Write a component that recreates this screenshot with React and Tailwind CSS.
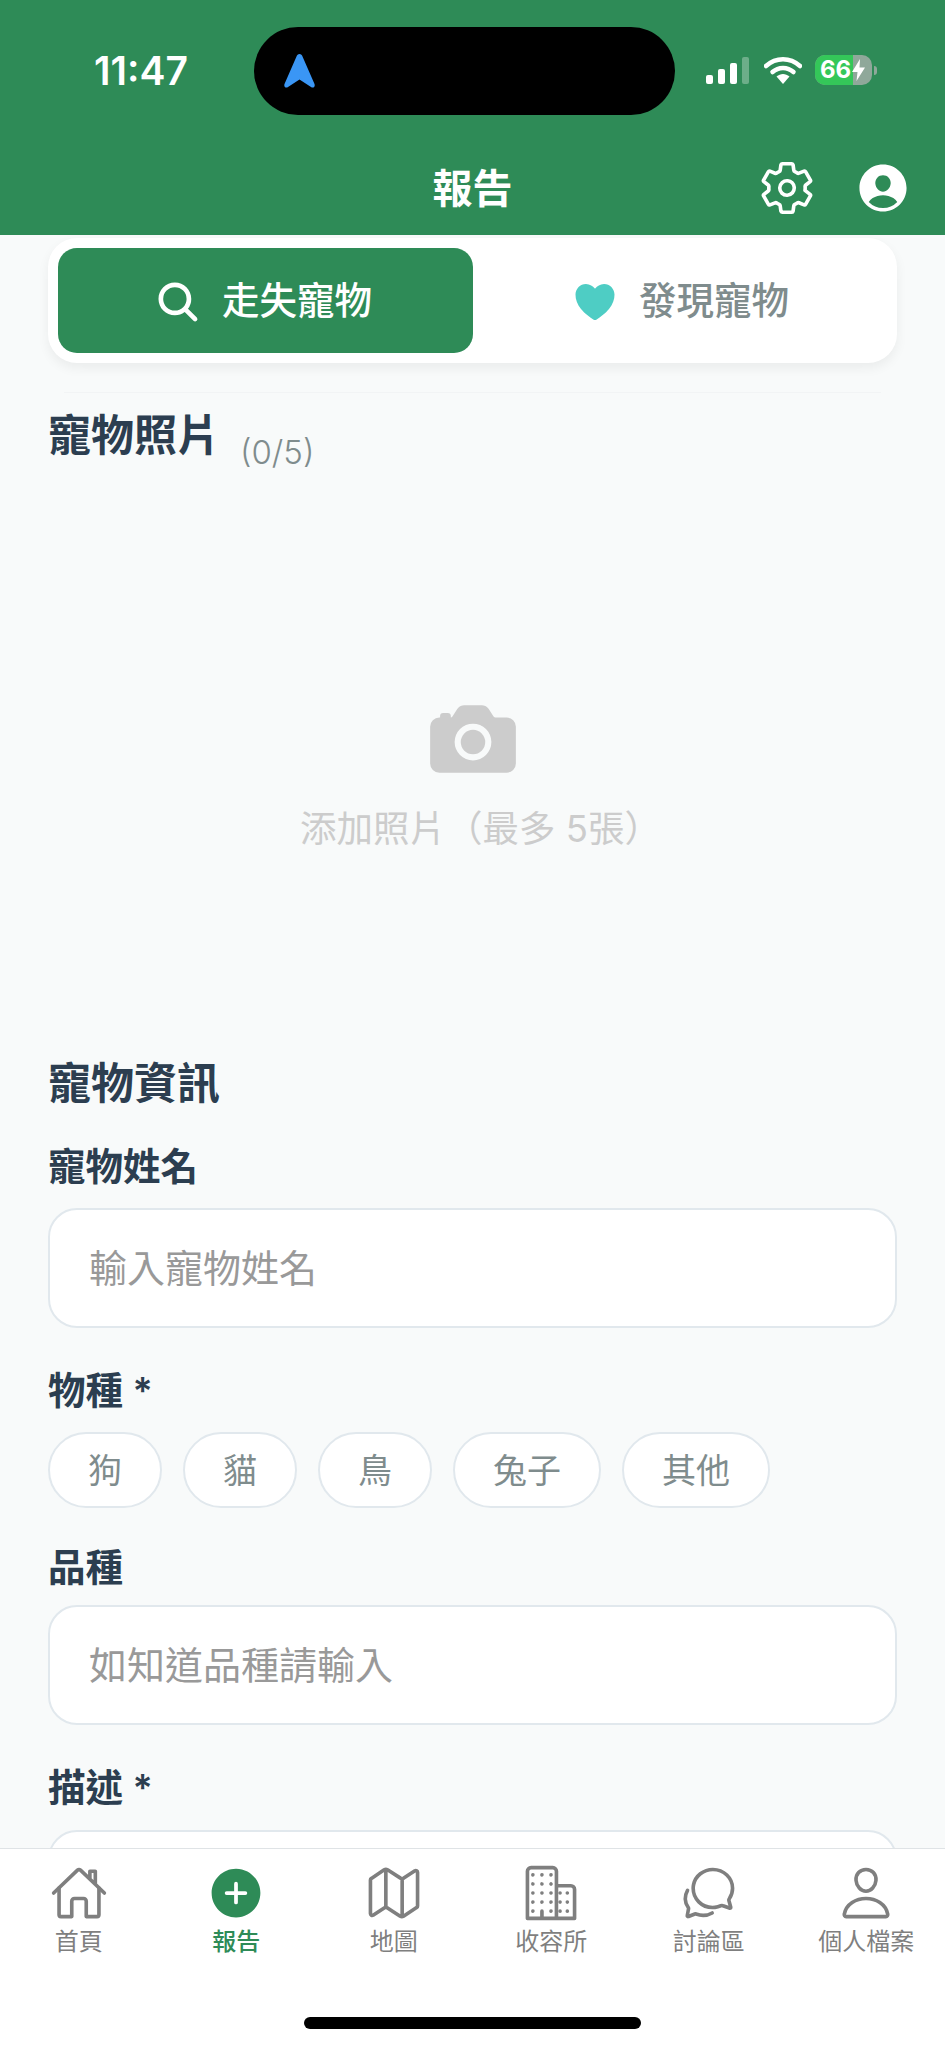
import React from "react";
import {
  IoSettingsOutline, IoPersonCircle, IoSearch, IoHeart, IoCamera, IoHomeOutline, IoAddCircle,
  IoMapOutline, IoBusinessOutline, IoChatbubblesOutline, IoPersonOutline,
} from "react-icons/io5";

function StatusIcons() {
  return (
    <div className="flex items-center">
      <svg width="44" height="27" viewBox="0 0 44 27" className="block">
        <rect x="0" y="18" width="7" height="9" rx="2" fill="#fff" />
        <rect x="12" y="12" width="7" height="15" rx="2" fill="#fff" />
        <rect x="24" y="6" width="7" height="21" rx="2" fill="#fff" />
        <rect x="36" y="0" width="7" height="27" rx="2" fill="#fff" fillOpacity="0.3" />
      </svg>
      <svg width="38" height="29" viewBox="0 0 38 29" className="block ml-[14px]">
        <path d="M2 10 C12 1 26 1 36 10" stroke="#fff" strokeWidth="4.5" fill="none" strokeLinecap="round" />
        <path d="M8.5 16 C14.5 10.5 23.5 10.5 29.5 16" stroke="#fff" strokeWidth="4.5" fill="none" strokeLinecap="round" />
        <path d="M12.5 20.5 C16.5 17 21.5 17 25.5 20.5 L19 28 Z" fill="#fff" />
      </svg>
      <div className="relative ml-[13px] w-[57px] h-[30px] rounded-[10px] overflow-hidden bg-[#8fa89a] flex items-center pl-[5px]">
        <div className="absolute left-0 top-0 bottom-0 w-[38px] bg-[#34c759]" />
        <span className="relative text-white text-[24px] leading-[30px] font-bold font-['Inter','Liberation_Sans',sans-serif]">66</span>
        <svg width="13" height="22" viewBox="0 0 13 22" className="relative ml-[1px]">
          <path d="M8 0 L0 13 H5.5 L4.5 22 L13 8.5 H7.5 Z" fill="#fff" />
        </svg>
      </div>
      <div className="ml-[2px] w-[3px] h-[9px] rounded-r bg-[#8fa89a]" />
    </div>
  );
}

function Label({ children, className = "" }) {
  return <div className={`text-[37.5px] leading-[44px] font-semibold text-[#2c3e50] ${className}`}>{children}</div>;
}

function Field({ placeholder, className = "" }) {
  return (
    <input
      readOnly
      placeholder={placeholder}
      className={`block w-full h-[120px] bg-white border-2 border-[#e1e8ed] rounded-[29px] px-[39px] text-[38px] outline-none placeholder:text-[#999999] ${className}`}
    />
  );
}

const chips = ["狗", "貓", "鳥", "兔子", "其他"];
const navItems = [
  { label: "首頁", Icon: IoHomeOutline },
  { label: "報告", Icon: IoAddCircle, active: true },
  { label: "地圖", Icon: IoMapOutline },
  { label: "收容所", Icon: IoBusinessOutline },
  { label: "討論區", Icon: IoChatbubblesOutline },
  { label: "個人檔案", Icon: IoPersonOutline },
];

export default function App() {
  return (
    <div className="relative w-[945px] h-[2048px] overflow-hidden flex flex-col bg-[#f8fafa] font-['Inter','Noto_Sans_CJK_TC',sans-serif]">
      <header className="relative shrink-0 h-[235px] bg-[#2e8b57]">
        <div className="flex items-start justify-between pl-[94px] pr-[68px] pt-[48px]">
          <div className="text-white text-[39px] leading-[46px] font-semibold">11:47</div>
          <div className="pt-[7px]"><StatusIcons /></div>
        </div>
        <div className="absolute left-[254px] top-[27px] w-[421px] h-[88px] rounded-full bg-black flex items-center pl-[30px]">
          <svg width="31" height="34" viewBox="0 0 31 34">
            <path d="M15.5 0 C17 0 18 1 18.5 2.5 L30.5 30 C31.5 33 29 34.5 27 33 L15.5 25.5 L4 33 C2 34.5 -0.5 33 0.5 30 L12.5 2.5 C13 1 14 0 15.5 0 Z" fill="#3a96f5" />
          </svg>
        </div>
        <div className="absolute left-0 right-0 top-[160px] h-[58px] flex items-center justify-center text-white text-[40px] font-bold">報告</div>
        <div className="absolute right-[33px] top-[159px] flex items-center gap-[38px]">
          <IoSettingsOutline size={58} color="#fff" />
          <IoPersonCircle size={58} color="#fff" />
        </div>
      </header>

      <main className="flex-1 min-h-0 overflow-hidden px-[48px]">
        <div className="mt-[3px] h-[125px] rounded-[29px] bg-white p-[10px] flex shadow-[0_5px_12px_rgba(0,0,0,0.06)]">
          <div className="w-[415px] h-full rounded-[19px] bg-[#2e8b57] flex items-center justify-center gap-[20px] pt-[2px] pr-[5px] text-white text-[37.5px] font-medium">
            <IoSearch size={48} color="#fff" />
            <span>走失寵物</span>
          </div>
          <div className="flex-1 flex items-center justify-center gap-[20px] pt-[2px] text-[#7f8c8d] text-[37.5px] font-medium">
            <IoHeart size={48} color="#4ecdc4" />
            <span>發現寵物</span>
          </div>
        </div>

        <div className="mt-[29px] mx-[16px] border-t border-[#f2f4f5]" />

        <div className="mt-[17px] flex items-start">
          <div className="text-[43px] leading-[50px] font-bold text-[#2c3e50]">寵物照片</div>
          <div className="ml-[20px] mt-[20px] text-[33px] leading-[44px] text-[#7f8c8d] font-['Inter',sans-serif] font-light">(0/5)</div>
        </div>

        <div className="mt-[216px] flex flex-col items-center">
          <IoCamera size={98} color="#cccccc" className="block" />
          <div className="mt-[17px] pl-[16px] text-[36.5px] leading-[48px] text-[#cccccc]">添加照片（最多 5張）</div>
        </div>

        <div className="mt-[205px] text-[43px] leading-[50px] font-bold text-[#2c3e50]">寵物資訊</div>
        <Label className="mt-[37px]">寵物姓名</Label>
        <Field className="mt-[19px]" placeholder="輸入寵物姓名" />

        <Label className="mt-[41px]">物種 *</Label>
        <div className="mt-[19px] flex gap-[21px]">
          {chips.map((c) => (
            <div
              key={c}
              className="h-[76px] px-[38px] rounded-full bg-white border-2 border-[#e1e8ed] flex items-center text-[34px] text-[#7f8c8d]"
            >
              {c}
            </div>
          ))}
        </div>

        <Label className="mt-[38px]">品種</Label>
        <Field className="mt-[15px]" placeholder="如知道品種請輸入" />

        <Label className="mt-[41px]">描述 *</Label>
        <div className="mt-[20px] h-[120px] bg-white border-2 border-[#e1e8ed] rounded-[29px]" />
      </main>

      <nav className="shrink-0 h-[200px] bg-white border-t border-[#dfe3e6] pt-[15px] relative">
        <div className="grid grid-cols-6">
          {navItems.map(({ label, Icon, active }) => (
            <div key={label} className="flex flex-col items-center">
              <div className="h-[58px] flex items-center justify-center">
                <Icon size={active ? 60 : 58} color={active ? "#2e8b57" : "#7f7f7f"} className="block" />
              </div>
              <div className={`mt-[4px] text-[24px] leading-[32px] ${active ? "text-[#2e8b57] font-medium" : "text-[#7f7f7f]"}`}>{label}</div>
            </div>
          ))}
        </div>
        <div className="absolute left-[304px] top-[168px] w-[337px] h-[12px] rounded-full bg-black" />
      </nav>
    </div>
  );
}
